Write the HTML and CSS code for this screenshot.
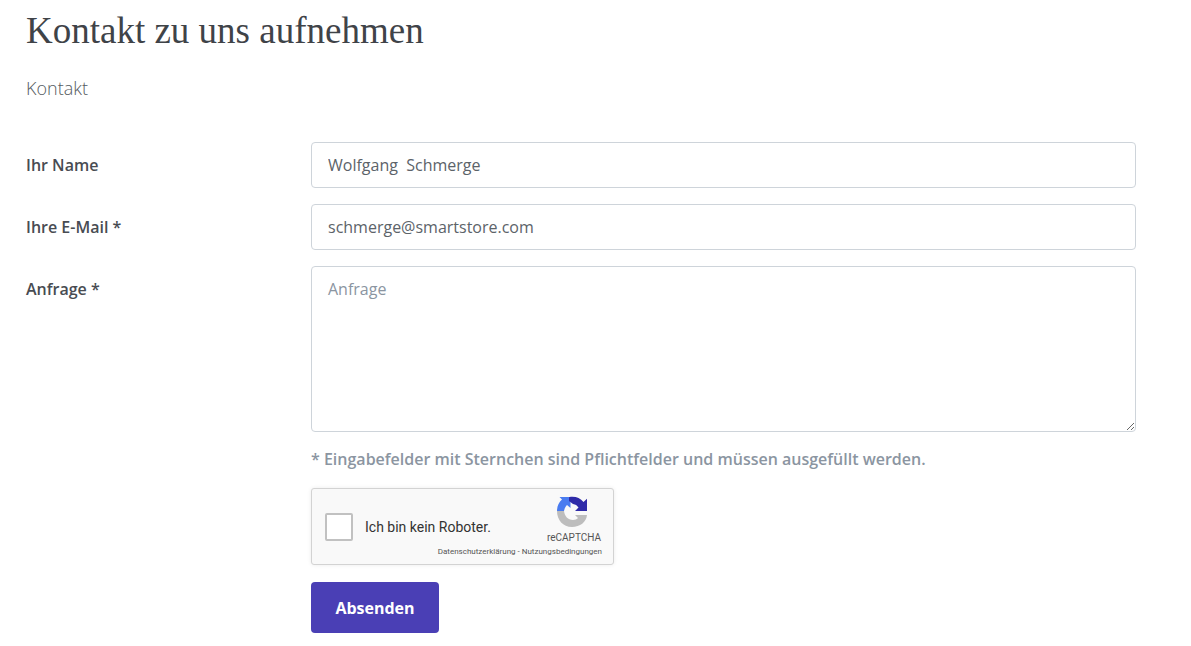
FILE: index.html
```html
<!DOCTYPE html>
<html lang="de">
<head>
  <meta charset="UTF-8">
  <title>Kontakt zu uns aufnehmen</title>
  <link rel="stylesheet" href="styles.css">
</head>
<body>

  <h1>Kontakt zu uns aufnehmen</h1>
  <p class="lead">Kontakt</p>

  <form class="contact-form">
    <label class="form-label" for="name">Ihr Name</label>
    <input class="form-control" id="name" type="text" value="Wolfgang  Schmerge">

    <label class="form-label" for="email">Ihre E-Mail *</label>
    <input class="form-control" id="email" type="text" value="schmerge@smartstore.com">

    <label class="form-label" for="enquiry">Anfrage *</label>
    <textarea class="form-control form-area" id="enquiry" placeholder="Anfrage"></textarea>

    <div class="form-rest">
      <p class="hint">* Eingabefelder mit Sternchen sind Pflichtfelder und müssen ausgefüllt werden.</p>

      <div class="captcha">
        <div class="captcha-box"></div>
        <div class="captcha-text">Ich bin kein Roboter.</div>
        <div class="captcha-brand">
          <svg class="captcha-logo" width="32" height="32" viewBox="0 0 32 32">
            <path fill="#4a7cf0" d="M1 15 C1 10 3 6 6 3.500 L3.500 1 L14.500 1 L14.500 12 L11 9 C9.500 10.500 8.500 12.500 8 15 Z"/>
            <path fill="#2f2ba8" d="M13 1.200 C19 0 24 2 27.500 6 L31 2.800 L31 15 L19 15 L22.500 11.500 C21 9.500 19.500 8.300 17 8 L13 5 Z"/>
            <path fill="#bdbdbd" d="M1 15 L8 15 C8.500 20 12 24 17 24 C19 24 21 23 22 22 L19 19 L31 19 C30.500 26 24 31 16 31 C7 31 1 24 1 15 Z"/>
          </svg>
          <div class="captcha-name">reCAPTCHA</div>
          <div class="captcha-links">Datenschutzerklärung - Nutzungsbedingungen</div>
        </div>
      </div>

      <button class="btn" type="button">Absenden</button>
    </div>
  </form>

</body>
</html>
```

FILE: styles.css
```css
body {
  font-family: "Open Sans", "Noto Sans", sans-serif;
  background: #fff;
  margin: 0;
  padding: 0 55px 12px 26px;
  color: #495057;
  font-size: 16px;
}
h1 {
  font-family: "Liberation Serif", serif;
  font-weight: 400;
  font-size: 37px;
  line-height: 44px;
  color: #3f4348;
  margin: 9px 0 0;
}
.lead {
  font-size: 18px;
  font-weight: 300;
  line-height: 26px;
  margin: 22px 0 0;
  color: #555b61;
}
.contact-form {
  display: grid;
  grid-template-columns: 285px 825px;
  row-gap: 16px;
  margin-top: 41px;
}
.form-label {
  font-weight: 600;
  line-height: 46px;
  font-size: 16px;
  color: #484c52;
}
.form-control {
  box-sizing: border-box;
  width: 100%;
  height: 46px;
  padding: 0 16px;
  border: 1px solid #ced4da;
  border-radius: 4px;
  font-family: inherit;
  font-size: 16px;
  color: #5c6369;
  outline: none;
}
.form-area {
  display: block;
  height: 166px;
  padding: 10px 16px;
  line-height: 24px;
}
.form-area::placeholder {
  color: #8b95a1;
  opacity: 1;
}
.form-rest {
  grid-column: 2;
  margin-top: -1px;
}
.hint {
  margin: 0;
  line-height: 24px;
  font-size: 16px;
  font-weight: 600;
  color: #8b95a1;
}
.captcha {
  box-sizing: border-box;
  display: flex;
  align-items: center;
  width: 303px;
  height: 77px;
  margin-top: 17px;
  background: #f9f9f9;
  border: 1px solid #d3d3d3;
  border-radius: 3px;
  box-shadow: 0 0 4px rgba(0,0,0,0.08);
  font-family: Roboto, sans-serif;
  color: #333;
}
.captcha-box {
  box-sizing: border-box;
  width: 28px;
  height: 28px;
  margin-left: 13px;
  background: #fff;
  border: 2px solid #c1c1c1;
  border-radius: 2px;
}
.captcha-text {
  margin-left: 12px;
  font-size: 14px;
}
.captcha-brand {
  display: flex;
  flex-direction: column;
  align-items: flex-end;
  margin-left: auto;
  padding-right: 12px;
  color: #555;
}
.captcha-logo {
  margin: 0 13px 4px 0;
}
.captcha-name {
  font-size: 10px;
  line-height: 12px;
}
.captcha-links {
  margin: 2px -1px 0 -130px;
  font-size: 8px;
  line-height: 12px;
  white-space: nowrap;
}
.btn {
  display: block;
  width: 128px;
  height: 51px;
  margin-top: 17px;
  background-color: #4a3fb5;
  color: white;
  border: none;
  border-radius: 4px;
  font-family: inherit;
  font-size: 16px;
  font-weight: 700;
  cursor: pointer;
}
```
